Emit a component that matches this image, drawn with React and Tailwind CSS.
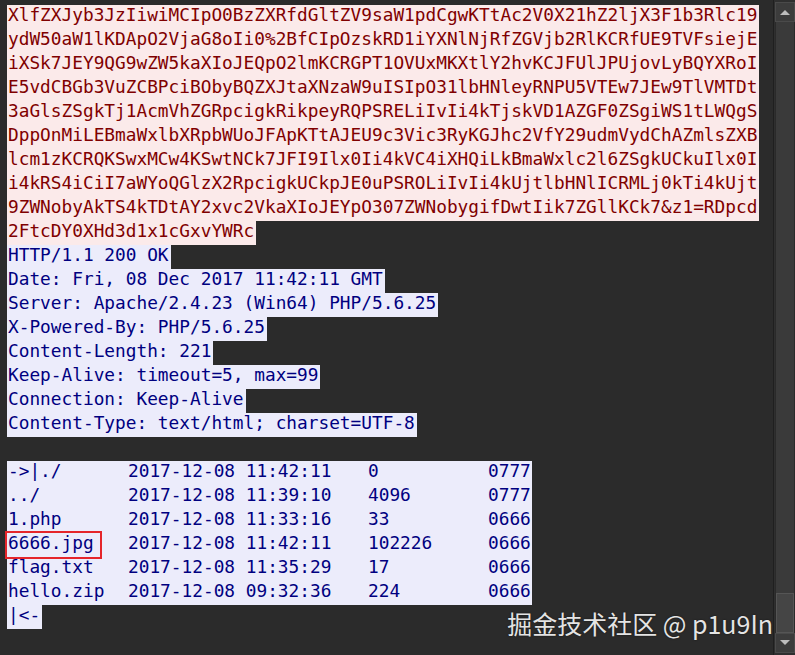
import React from "react";

const REQUEST = [
  "XlfZXJyb3JzIiwiMCIpO0BzZXRfdGltZV9saW1pdCgwKTtAc2V0X21hZ2ljX3F1b3Rlc19",
  "ydW50aW1lKDApO2VjaG8oIi0%2BfCIpOzskRD1iYXNlNjRfZGVjb2RlKCRfUE9TVFsiejE",
  "iXSk7JEY9QG9wZW5kaXIoJEQpO2lmKCRGPT1OVUxMKXtlY2hvKCJFUlJPUjovLyBQYXRoI",
  "E5vdCBGb3VuZCBPciBObyBQZXJtaXNzaW9uISIpO31lbHNleyRNPU5VTEw7JEw9TlVMTDt",
  "3aGlsZSgkTj1AcmVhZGRpcigkRikpeyRQPSRELiIvIi4kTjskVD1AZGF0ZSgiWS1tLWQgS",
  "DppOnMiLEBmaWxlbXRpbWUoJFApKTtAJEU9c3Vic3RyKGJhc2VfY29udmVydChAZmlsZXB",
  "lcm1zKCRQKSwxMCw4KSwtNCk7JFI9Ilx0Ii4kVC4iXHQiLkBmaWxlc2l6ZSgkUCkuIlx0I",
  "i4kRS4iCiI7aWYoQGlzX2RpcigkUCkpJE0uPSROLiIvIi4kUjtlbHNlICRMLj0kTi4kUjt",
  "9ZWNobyAkTS4kTDtAY2xvc2VkaXIoJEYpO307ZWNobygifDwtIik7ZGllKCk7&z1=RDpcd",
  "2FtcDY0XHd3d1x1cGxvYWRc",
];

const HEADERS = [
  "HTTP/1.1 200 OK",
  "Date: Fri, 08 Dec 2017 11:42:11 GMT",
  "Server: Apache/2.4.23 (Win64) PHP/5.6.25",
  "X-Powered-By: PHP/5.6.25",
  "Content-Length: 221",
  "Keep-Alive: timeout=5, max=99",
  "Connection: Keep-Alive",
  "Content-Type: text/html; charset=UTF-8",
];

const FILES = [
  ["->|./", "2017-12-08 11:42:11", "0", "0777"],
  ["../", "2017-12-08 11:39:10", "4096", "0777"],
  ["1.php", "2017-12-08 11:33:16", "33", "0666"],
  ["6666.jpg", "2017-12-08 11:42:11", "102226", "0666", true],
  ["flag.txt", "2017-12-08 11:35:29", "17", "0666"],
  ["hello.zip", "2017-12-08 09:32:36", "224", "0666"],
];

function Arrow({ up }) {
  return (
    <svg width="12" height="8" viewBox="0 0 12 8">
      <path d={up ? "M1 7 L6 2 L11 7 Z" : "M1 1 L6 6 L11 1 Z"} fill="#bdbdbd" />
    </svg>
  );
}

export default function App() {
  return (
    <div className="relative w-[795px] h-[655px] bg-[#2b2b2b] overflow-hidden flex">
      <div
        className="flex-1 pt-[5px] pl-[7px] text-[17.8px] leading-[20px] whitespace-pre"
        style={{ fontFamily: '"DejaVu Sans Mono", "Liberation Mono", monospace' }}
      >
        {REQUEST.map((line, i) => (
          <div key={i} className="w-fit h-[24px] pl-px pr-[2px] bg-[#fbeaea] text-[#800000]">
            {line}
          </div>
        ))}
        {HEADERS.map((line, i) => (
          <div key={i} className="w-fit h-[24px] pl-px pr-[2px] bg-[#ececfb] text-[#000080]">
            {line}
          </div>
        ))}
        <div className="h-[24px]" />
        {FILES.map(([name, date, size, perm, boxed]) => (
          <div key={name} className="flex w-[525px] h-[24px] pl-px bg-[#ececfb] text-[#000080]">
            <span className="relative w-[120px]">
              {name}
              {boxed && (
                <span className="absolute left-[-3px] top-[-2px] w-[97px] h-[28px] border-2 border-[#e5252a]" />
              )}
            </span>
            <span className="w-[240px]">{date}</span>
            <span className="w-[120px]">{size}</span>
            <span>{perm}</span>
          </div>
        ))}
        <div className="w-fit h-[24px] pl-px pr-[2px] bg-[#ececfb] text-[#000080]">|&lt;-</div>
      </div>

      <div className="w-[22px] h-full flex flex-col border-l border-[#1f1f1f] bg-[#2f2f2f] py-[2px] pl-px">
        <div className="h-[20px] w-[20px] flex items-center justify-center bg-[#3c3c3c] border border-[#4a4a4a]">
          <Arrow up />
        </div>
        <div className="flex-1 flex flex-col justify-end bg-[#3a3a3a] border-x border-[#2a2a2a]">
          <div className="h-[40px] bg-[#454545] border border-[#555555]" />
        </div>
        <div className="h-[20px] w-[20px] flex items-center justify-center bg-[#3c3c3c] border border-[#4a4a4a]">
          <Arrow />
        </div>
      </div>

      <div
        className="absolute right-[22px] bottom-[19px] text-[25px] leading-none text-[#e4e4e4] [text-shadow:0_0_2px_rgba(0,0,0,0.6)]"
        style={{ fontFamily: '"Noto Sans CJK SC", "Noto Sans", sans-serif' }}
      >
        掘金技术社区 @ p1u9In
      </div>
    </div>
  );
}
